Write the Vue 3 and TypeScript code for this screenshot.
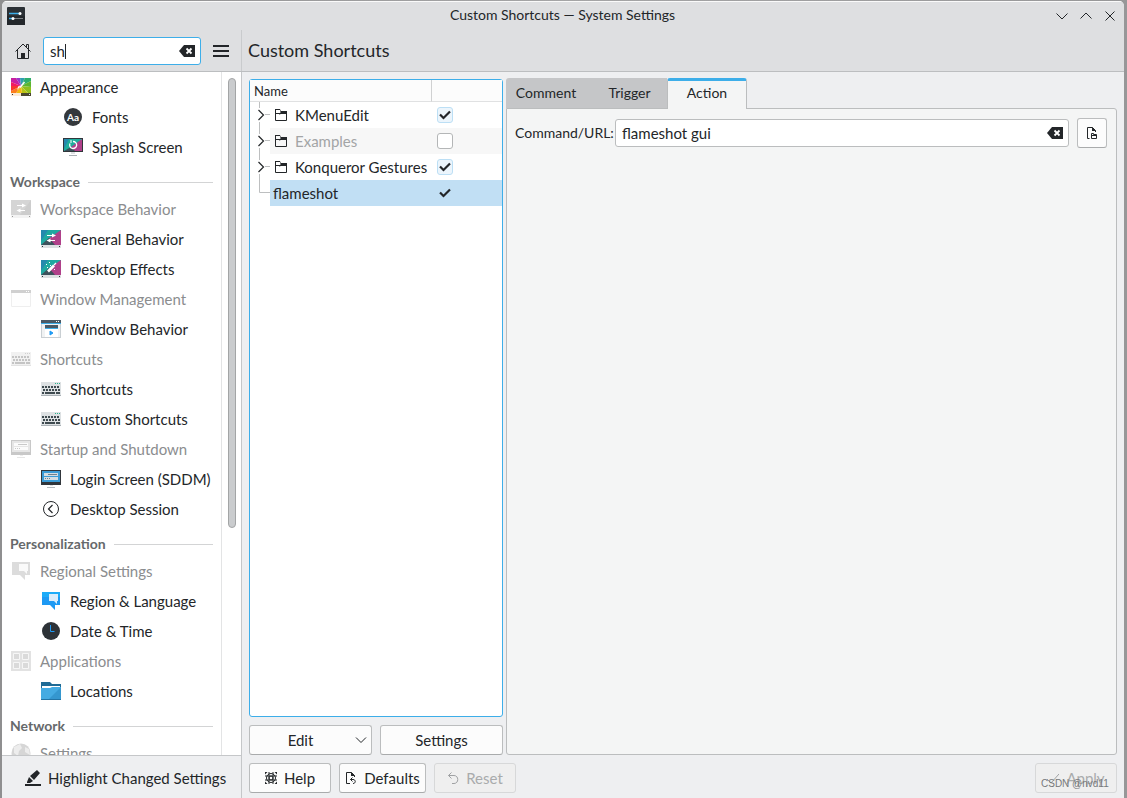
<script setup lang="ts">
import { ref } from 'vue'

interface Entry {
  kind: 'item' | 'header'
  label: string
  level?: 0 | 1 | 2
  icon?: string
  dim?: boolean
}

interface ActionRow {
  name: string
  enabled: boolean
  group: boolean
  dim?: boolean
  selected?: boolean
}

const query = ref('sh')
const command = ref('flameshot gui')
const activeTab = ref('Action')
const tabs = ['Comment', 'Trigger', 'Action']

const entries: Entry[] = [
  { kind: 'item', label: 'Appearance', level: 0, icon: 'appearance' },
  { kind: 'item', label: 'Fonts', level: 2, icon: 'fonts' },
  { kind: 'item', label: 'Splash Screen', level: 2, icon: 'splash' },
  { kind: 'header', label: 'Workspace' },
  { kind: 'item', label: 'Workspace Behavior', level: 0, icon: 'behavior', dim: true },
  { kind: 'item', label: 'General Behavior', level: 1, icon: 'behavior' },
  { kind: 'item', label: 'Desktop Effects', level: 1, icon: 'effects' },
  { kind: 'item', label: 'Window Management', level: 0, icon: 'windows', dim: true },
  { kind: 'item', label: 'Window Behavior', level: 1, icon: 'winbehavior' },
  { kind: 'item', label: 'Shortcuts', level: 0, icon: 'keyboard', dim: true },
  { kind: 'item', label: 'Shortcuts', level: 1, icon: 'keyboard' },
  { kind: 'item', label: 'Custom Shortcuts', level: 1, icon: 'keyboard' },
  { kind: 'item', label: 'Startup and Shutdown', level: 0, icon: 'login', dim: true },
  { kind: 'item', label: 'Login Screen (SDDM)', level: 1, icon: 'login' },
  { kind: 'item', label: 'Desktop Session', level: 1, icon: 'session' },
  { kind: 'header', label: 'Personalization' },
  { kind: 'item', label: 'Regional Settings', level: 0, icon: 'region', dim: true },
  { kind: 'item', label: 'Region & Language', level: 1, icon: 'region' },
  { kind: 'item', label: 'Date & Time', level: 1, icon: 'clock' },
  { kind: 'item', label: 'Applications', level: 0, icon: 'apps', dim: true },
  { kind: 'item', label: 'Locations', level: 1, icon: 'folder' },
  { kind: 'header', label: 'Network' },
  { kind: 'item', label: 'Settings', level: 0, icon: 'globe', dim: true },
]

const rows = ref<ActionRow[]>([
  { name: 'KMenuEdit', enabled: true, group: true },
  { name: 'Examples', enabled: false, group: true, dim: true },
  { name: 'Konqueror Gestures', enabled: true, group: true },
  { name: 'flameshot', enabled: true, group: false, selected: true },
])

const keyRows = [
  { y: 8, xs: [1, 4, 7, 10, 13, 16] },
  { y: 11, xs: [2, 5, 8, 11, 14, 17] },
]
</script>

<template>
  <div class="desktop">
    <div class="window">
      <header class="titlebar">
        <svg class="app-icon" viewBox="0 0 18 18" aria-hidden="true">
          <rect width="18" height="18" rx="1" fill="#2b3035" />
          <rect y="9" width="18" height="9" fill="#23272b" />
          <path d="M2 6.5h12" stroke="#3daee9" stroke-width="1.4" />
          <path d="M7 11.5h9" stroke="#7b8084" stroke-width="1.2" />
          <path d="M2 11.5h4" stroke="#3daee9" stroke-width="1.4" />
          <circle cx="13" cy="6.5" r="1.5" fill="#fff" />
          <circle cx="6" cy="11.5" r="1.5" fill="#fff" />
        </svg>
        <h1>Custom Shortcuts — System Settings</h1>
        <div class="win-buttons">
          <button aria-label="Minimize"><svg viewBox="0 0 12 12"><path d="M.5 3.500 6 9l5.500-5.500" /></svg></button>
          <button aria-label="Maximize"><svg viewBox="0 0 12 12"><path d="M.5 8.500 6 3l5.500 5.500" /></svg></button>
          <button aria-label="Close"><svg viewBox="0 0 12 12"><path d="M1.500 1.500l9 9M10.500 1.500l-9 9" /></svg></button>
        </div>
      </header>

      <div class="toolbar">
        <div class="tools">
          <button class="plain home" aria-label="Home">
            <svg width="16" height="16" viewBox="0 0 16 16" fill="none" stroke="#232629">
              <path d="M.5 8.500 8 1l7.500 7.500M2.500 7v8.500h11V7M11.500 4V1.500h2V6" />
              <path d="M6 10h4v5.500H6z" fill="#232629" stroke="none" />
            </svg>
          </button>
          <div class="search">
            <input v-model="query" type="text" aria-label="Search" />
            <span class="caret"></span>
            <button class="plain clear" aria-label="Clear search">
              <svg width="16" height="12" viewBox="0 0 16 12"><path d="M5 0h11v12H5L0 6z" fill="#232629" /><path d="M7.500 3.500l5 5M12.500 3.500l-5 5" stroke="#fff" stroke-width="1.800" /></svg>
            </button>
          </div>
          <button class="plain menu" aria-label="Menu">
            <svg width="16" height="12" viewBox="0 0 16 12"><path d="M0 1h16M0 6h16M0 11h16" stroke="#232629" stroke-width="2" /></svg>
          </button>
        </div>
        <h2>Custom Shortcuts</h2>
      </div>

      <div class="content">
        <aside class="sidebar">
          <div class="scroll">
            <nav class="list">
              <template v-for="(e, i) in entries" :key="i">
                <h3 v-if="e.kind === 'header'"><span>{{ e.label }}</span></h3>
                <a v-else href="#" :class="['item', 'level-' + e.level, { dim: e.dim }]">
                  <svg class="icon" viewBox="0 0 20 20" aria-hidden="true">
                    <g v-if="e.icon === 'appearance'">
                      <path d="M10 9 0 5V1h5z" fill="#c81fa0" /><path d="M10 9 5 1h4z" fill="#9a35c8" /><path d="M10 9 9 1h5z" fill="#2f9fb0" />
                      <path d="M10 9l4-8h6v3z" fill="#2fae6c" /><path d="M10 9l10-5v6z" fill="#5cb531" /><path d="M10 9l10 1v6h-3z" fill="#8fbf1f" /><path d="M10 9l7 7h-6z" fill="#b9c516" />
                      <path d="M10 9l1 7H5z" fill="#f0b90f" /><path d="M10 9 5 16H0v-2z" fill="#fb7d1d" /><path d="M10 9 0 14V9z" fill="#f8352f" /><path d="M10 9H0V5z" fill="#f01a62" />
                      <path d="M0 16h10v3H0z" fill="#fbead8" /><path d="M10 16h10v3H10z" fill="#4c4930" />
                      <path d="M1 17h1v1H1z" fill="#333" /><path d="M18 17h1v1h-1z" fill="#eee" />
                      <path d="M13.500 5 9 10.500" stroke="#fff" stroke-width="1.500" /><path d="M9.500 9.500 6 13l1.500-4z" fill="#fff" />
                    </g>
                    <g v-else-if="e.icon === 'fonts'">
                      <circle cx="10" cy="10" r="9" fill="#34383c" />
                      <text x="10" y="14" text-anchor="middle" class="aa">Aa</text>
                    </g>
                    <g v-else-if="e.icon === 'splash'">
                      <path d="M0 1h20v14H0z" fill="#31363b" /><path d="M1 2h18v12H1z" fill="#1fae9c" /><path d="M1 2h5L1 12z" fill="#2589ad" /><path d="M19 2v12h-9l-2-4z" fill="#b0408a" /><path d="M1 14h11l-4-4z" fill="#3b4f59" />
                      <path d="M7 6.500a3.500 3.500 0 1 0 3-2" fill="none" stroke="#fff" stroke-width="1.300" /><path d="M7 3h2v3H7z" fill="#fff" opacity=".5" />
                      <path d="M8 15h4v2H8z" fill="#dfe2e4" /><path d="M6 18h8v1H6z" fill="#a9afb4" />
                    </g>
                    <g v-else-if="e.icon === 'behavior' || e.icon === 'effects'">
                      <g v-if="e.dim"><path d="M0 1h20v15H0z" fill="#d5d5d5" /><path d="M20 1v15H9z" fill="#cdcdcd" /></g>
                      <g v-else><path d="M0 1h20v15H0z" fill="#1fa8a0" /><path d="M0 1h7L0 12z" fill="#2589ad" /><path d="M20 1v15h-9L7 10z" fill="#b0408a" /><path d="M0 16h14L8 9z" fill="#3d525c" /></g>
                      <path d="M0 16h20v3H0z" :fill="e.dim ? '#f3f3f3' : '#dce0e2'" /><path d="M1 17h1v1H1zM18 17h1v1h-1z" :fill="e.dim ? '#999' : '#2b3035'" />
                      <g v-if="e.icon === 'behavior'">
                        <path d="M6 6.500h7M8 11.500h6" stroke="#fff" /><path d="M11 4.500l4 2-4 2z" fill="#fff" /><path d="M9.500 9.500v4l-4-2z" fill="#fff" />
                      </g>
                      <g v-else>
                        <path d="M7 12.500l6-6" stroke="#fff" stroke-width="2.600" /><path d="M13 6l2-2" stroke="#fff" stroke-width="1.200" />
                        <path d="M5 5h1v1H5zM8 3h1v1H8zM9 6h1v1H9zM6 8h1v1H6zM13 10h1v1h-1z" fill="#fff" />
                      </g>
                    </g>
                    <g v-else-if="e.icon === 'windows'">
                      <path d="M.5 3.500h19v14H.5z" fill="#fefefe" stroke="#eee" /><path d="M0 1h20v3H0z" fill="#d0d0d0" /><path d="M15 2h1v1h-1zM17 2h1v1h-1z" fill="#fff" />
                    </g>
                    <g v-else-if="e.icon === 'winbehavior'">
                      <path d="M0 4h20v15H0z" fill="#c9cfd3" /><path d="M1 5h18v13H1z" fill="#f0f2f3" /><path d="M0 1h20v3H0z" fill="#4a5a66" /><path d="M0 4h20v1H0z" fill="#3daee9" />
                      <path d="M15 2h1v1h-1zM17 2h1v1h-1z" fill="#fff" /><path d="M4 6h13v3H4z" fill="#4a5a66" /><path d="M4 9h13v1H4z" fill="#3daee9" /><path d="M4 10h13v8H4z" fill="#fff" />
                      <path d="M9 12l3 2-3 2z" fill="#1d99f3" stroke="#1d99f3" />
                    </g>
                    <g v-else-if="e.icon === 'keyboard'">
                      <path d="M0 3h20v13H0z" :fill="e.dim ? '#f1f1f1' : '#dde1e3'" /><path d="M0 16h20v1H0z" :fill="e.dim ? '#e2e2e2' : '#a9b0b5'" />
                      <path d="M14 4h1v1h-1zM16 4h1v1h-1zM18 4h1v1h-1z" :fill="e.dim ? '#d0d0d0' : '#28b08d'" />
                      <g :fill="e.dim ? '#c4c4c4' : '#3f4b50'">
                        <template v-for="r in keyRows" :key="r.y">
                          <rect v-for="x in r.xs" :key="x" :x="x" :y="r.y - 1" width="2" height="2" />
                        </template>
                        <path d="M1 13h2v2H1zM4 13h10v2H4zM15 13h4v2h-4z" />
                      </g>
                    </g>
                    <g v-else-if="e.icon === 'login'">
                      <path d="M0 1h20v15H0z" :fill="e.dim ? '#c8c8c8' : '#31363b'" /><path d="M1 2h18v11H1z" :fill="e.dim ? '#e6e6e6' : '#3a9bd6'" />
                      <path d="M3 4h14v3H3zM3 8h14v3H3z" :fill="e.dim ? '#fbfbfb' : '#d3dde3'" />
                      <path d="M7 5h9v1H7zM4 9h1v1H4zM6 9h1v1H6zM8 9h1v1H8z" :fill="e.dim ? '#c9c9c9' : '#70818d'" />
                      <path d="M9 16h3v1H9z" :fill="e.dim ? '#eee' : '#dfe2e4'" /><path d="M6 18h8v1H6z" :fill="e.dim ? '#e6e6e6' : '#b4babf'" />
                    </g>
                    <g v-else-if="e.icon === 'session'" fill="none" stroke="#232629">
                      <circle cx="10" cy="10" r="7.500" /><path d="M11.500 6 7.500 10l4 4" stroke-width="1.200" />
                    </g>
                    <g v-else-if="e.icon === 'region'">
                      <path d="M1 1h18v13h-5v5l-5-5H1z" :fill="e.dim ? '#dcdcdc' : '#1d99f3'" /><path d="M1 1h18v5H1z" :fill="e.dim ? '#dcdcdc' : '#1cabf8'" />
                      <path d="M8 3h9v7h-1v3l-3-3H8z" :fill="e.dim ? '#fafafa' : '#d9ecfb'" />
                    </g>
                    <g v-else-if="e.icon === 'clock'">
                      <circle cx="10" cy="10" r="9" fill="#2d3237" /><path d="M9.500 4v6.500h4" fill="none" stroke="#1d99f3" />
                    </g>
                    <g v-else-if="e.icon === 'apps'">
                      <path d="M0 0h20v20H0z" fill="#e2e2e2" /><path d="M2.500 2.500h6v6h-6zM11.500 2.500h6v6h-6zM2.500 11.500h6v6h-6zM11.500 11.500h6v6h-6z" fill="#dadada" stroke="#f6f6f6" />
                    </g>
                    <g v-else-if="e.icon === 'folder'">
                      <path d="M0 1h9l2 2h9v8H0z" fill="#1f6b96" /><path d="M1 5h18v4H1z" fill="#fff" /><path d="M0 7h9l2-1h9v12H0z" fill="#45abe2" /><path d="M20 6v12H8z" fill="#3597cf" /><path d="M0 18h20v1H0z" fill="#2374a5" />
                    </g>
                    <g v-else-if="e.icon === 'globe'">
                      <circle cx="10" cy="10" r="9.500" fill="#d6d6d6" /><path d="M3 4l6-3 2 4-3 3-1 5-4-3zM14 4l4 2 1 6-5-3z" fill="#ededed" />
                    </g>
                  </svg>
                  <span>{{ e.label }}</span>
                </a>
              </template>
            </nav>
            <div class="track"><div class="thumb"></div></div>
          </div>
          <button class="highlight">
            <svg width="16" height="16" viewBox="0 0 16 16" fill="#232629"><path d="M0 14h16v2H0zM2 12l2-5 4 4-3 2H2zM5 6l7-6 3 3-6 7z" /></svg>
            <span>Highlight Changed Settings</span>
          </button>
        </aside>

        <main>
          <div class="panes">
            <section class="left">
              <div class="tree">
                <table>
                  <colgroup><col class="c-branch" /><col class="c-name" /><col /></colgroup>
                  <thead>
                    <tr><th colspan="2" scope="col">Name</th><th class="state" scope="col"></th></tr>
                  </thead>
                  <tbody>
                    <tr v-for="(r, i) in rows" :key="r.name" :class="{ alt: i === 1, selected: r.selected, muted: r.dim }">
                      <td class="branch">
                        <svg width="20" height="26" viewBox="0 0 20 26" fill="none">
                          <path v-if="r.group" d="M9.500 0v6M9.500 20v6M15 12.500h5" stroke="#bdbfc0" />
                          <path v-else d="M9.500 0v12.500H20" stroke="#bdbfc0" />
                          <path v-if="r.group" d="M8.500 8l5 5-5 5" stroke="#232629" stroke-width="1.200" />
                        </svg>
                      </td>
                      <td>
                        <div class="name">
                          <svg v-if="r.group" width="12" height="12" viewBox="0 0 12 12" fill="none" stroke="#232629">
                            <path d="M.5 0v11.500h11V3" /><path d="M0 .5h5" /><path d="M5 0l1 2h6v3H5.500L4.500 6V5l1-1.500z" fill="#232629" stroke="none" /><path d="M.5 4.500h5" />
                          </svg>
                          <span>{{ r.name }}</span>
                        </div>
                      </td>
                      <td class="check">
                        <input v-model="r.enabled" type="checkbox" :class="{ bare: r.selected }" :aria-label="'Enable ' + r.name" />
                        <svg v-if="r.enabled" width="16" height="16" viewBox="0 0 16 16"><path d="M3 7.500l3.500 3.500 6.500-6.500" fill="none" stroke="#232629" stroke-width="2.200" /></svg>
                      </td>
                    </tr>
                  </tbody>
                </table>
              </div>
              <div class="pair">
                <button class="btn edit"><span>Edit</span><svg width="12" height="12" viewBox="0 0 12 12"><path d="M1 3.500l5 5 5-5" fill="none" stroke="#232629" /></svg></button>
                <button class="btn">Settings</button>
              </div>
            </section>

            <section class="right">
              <div class="tabs" role="tablist">
                <button v-for="t in tabs" :key="t" role="tab" :aria-selected="activeTab === t" :class="{ active: activeTab === t }" @click="activeTab = t">{{ t }}</button>
              </div>
              <div class="panel" role="tabpanel">
                <div class="field">
                  <label for="command">Command/URL:</label>
                  <div class="command">
                    <input id="command" v-model="command" type="text" />
                    <button class="plain clear" aria-label="Clear command">
                      <svg width="16" height="12" viewBox="0 0 16 12"><path d="M5 0h11v12H5L0 6z" fill="#232629" /><path d="M7.500 3.500l5 5M12.500 3.500l-5 5" stroke="#fff" stroke-width="1.800" /></svg>
                    </button>
                  </div>
                  <button class="btn open" aria-label="Open file">
                    <svg width="12" height="12" viewBox="0 0 12 12" fill="none" stroke="#232629"><path d="M3.500 11.500h-2V.5h5l3 3V5" /><path d="M6 0l4 4H6z" fill="#232629" stroke="none" /><path d="M5.500 11.500v-5h2v1h3v4zM6 8.500h4" /></svg>
                  </button>
                </div>
              </div>
            </section>
          </div>

          <footer>
            <button class="btn wide">
              <svg width="12" height="12" viewBox="0 0 12 12" fill="none" stroke="#232629"><circle cx="6" cy="6" r="4.500" /><circle cx="6" cy="6" r="2" /><path d="M0 4h12M0 8h12M4 0v12M8 0v12" /><path d="M0 0h2.500L0 2.500zM12 0v2.500L9.500 0zM0 12V9.500L2.500 12zM12 12H9.500L12 9.500z" fill="#232629" stroke="none" /></svg>
              <span>Help</span>
            </button>
            <button class="btn defaults">
              <svg width="12" height="14" viewBox="0 0 12 14" fill="none" stroke="#232629"><path d="M5 12.500H1.500v-11h5l3 3V6" /><path d="M6 1l4 4H6z" fill="#232629" stroke="none" /><path d="M7.500 6.500l-2 2 2 2M5.500 8.500H8c3 0 3 4 0 4" /></svg>
              <span>Defaults</span>
            </button>
            <button class="btn wide" disabled>
              <svg width="12" height="14" viewBox="0 0 12 14" fill="none" stroke="#9fa1a3"><path d="M4.500 1.500l-3 3 3 3M1.500 4.500H7c5 0 5 8 0 8H5" /></svg>
              <span>Reset</span>
            </button>
            <div class="apply">
              <button class="btn wide" disabled>
                <svg width="12" height="12" viewBox="0 0 12 12" fill="none" stroke="#9fa1a3"><path d="M0 7l4 4 8-9" /></svg>
                <span>Apply</span>
              </button>
              <span class="mark">CSDN @nvd11</span>
            </div>
          </footer>
        </main>
      </div>
    </div>
  </div>
</template>

<style>
body {
  margin: 0;
  background: #a5a5a6;
}
</style>

<style scoped>
* {
  box-sizing: border-box;
}

.desktop {
  height: 100vh;
  padding: 1px 3px 0 2px;
  overflow: hidden;
  background: linear-gradient(90deg, #8f8f90, #a5a5a6 50%, #979798);
  color: #232629;
  font: 15px/20px Lato, "Noto Sans", sans-serif;
}

button,
input {
  margin: 0;
  color: inherit;
  font: inherit;
}

h1,
h2,
h3 {
  margin: 0;
}

.plain {
  display: flex;
  padding: 0;
  border: 0;
  background: none;
}

.window {
  display: flex;
  flex-direction: column;
  height: 100%;
  overflow: hidden;
  border-radius: 5px 5px 0 0;
  background: #eeeff1;
}

.titlebar {
  display: flex;
  flex: none;
  align-items: center;
  height: 29px;
  padding: 0 8px 0 5px;
  border-top: 1px solid #fafafa;
  background: #dedfe1;
}

.app-icon {
  width: 18px;
  height: 18px;
}

h1 {
  flex: 1;
  padding: 0 0 2px 44px;
  font-size: 14px;
  font-weight: 400;
  text-align: center;
}

.win-buttons {
  display: flex;
  gap: 12px;
}

.win-buttons button {
  display: flex;
  padding: 0;
  border: 0;
  background: none;
}

.win-buttons svg {
  width: 12px;
  height: 12px;
  fill: none;
  stroke: #232629;
}

.toolbar {
  display: flex;
  flex: none;
  align-items: stretch;
  height: 42px;
  border-bottom: 1px solid #bcbec0;
  background: #dedfe1;
}

.tools {
  display: flex;
  align-items: center;
  width: 240px;
  padding: 0 12px 0 13px;
  border-right: 1px solid #c9cbcd;
}

.search {
  position: relative;
  flex: 1;
  margin: 0 12px;
}

.search input,
.command input {
  display: block;
  width: 100%;
  height: 28px;
  padding: 0 30px 0 6px;
  border: 1px solid #3daee9;
  border-radius: 3px;
  outline: 0;
  background: #fff;
}

.clear {
  position: absolute;
  top: 8px;
  right: 6px;
}

.caret {
  position: absolute;
  top: 7px;
  left: 22px;
  width: 1px;
  height: 15px;
  background: #232629;
}

h2 {
  padding-left: 6px;
  font-size: 18px;
  font-weight: 400;
  line-height: 40px;
}

.content {
  display: flex;
  flex: 1;
  min-height: 0;
}

.sidebar {
  display: flex;
  flex: none;
  flex-direction: column;
  width: 240px;
  border-right: 1px solid #c5c7c9;
}

.scroll {
  display: flex;
  flex: 1;
  min-height: 0;
  overflow: hidden;
  background: #fff;
}

.list {
  flex: 1;
  border-right: 1px solid #e3e4e5;
}

.item {
  display: flex;
  align-items: center;
  gap: 9px;
  height: 30px;
  padding-left: 9px;
  color: #232629;
  text-decoration: none;
  white-space: nowrap;
}

.level-1 {
  padding-left: 39px;
}

.level-2 {
  padding-left: 61px;
}

.dim {
  color: #8b8d8f;
}

.icon {
  flex: none;
  width: 20px;
  height: 20px;
}

.aa {
  fill: #fff;
  font-size: 10px;
  font-weight: 700;
}

h3 {
  display: flex;
  align-items: center;
  gap: 8px;
  height: 32px;
  padding: 8px 8px 0;
  color: #66696b;
  font-size: 14px;
  font-weight: 700;
}

h3::after {
  flex: 1;
  height: 1px;
  background: #d3d4d5;
  content: "";
}

.track {
  flex: none;
  width: 19px;
  padding: 6px 5px 5px 6px;
}

.thumb {
  height: 67%;
  border: 1px solid #a3a5a6;
  border-radius: 4px;
  background: #caccce;
}

.highlight {
  display: flex;
  flex: none;
  align-items: center;
  gap: 7px;
  height: 43px;
  padding: 2px 0 0 23px;
  border: 0;
  border-top: 1px solid #c5c7c9;
  background: #eeeff1;
  white-space: nowrap;
}

main {
  display: flex;
  flex: 1;
  flex-direction: column;
  min-width: 0;
  padding: 6px 7px 5px;
}

.panes {
  display: flex;
  flex: 1;
  gap: 3px;
  min-height: 0;
}

.left {
  display: flex;
  flex: none;
  flex-direction: column;
  gap: 8px;
  width: 254px;
  padding-top: 1px;
}

.tree {
  flex: 1;
  border: 1px solid #3daee9;
  border-radius: 3px;
  background: #fff;
}

table {
  width: 100%;
  border-collapse: separate;
  border-spacing: 0;
  table-layout: fixed;
}

.c-branch {
  width: 20px;
}

.c-name {
  width: 161px;
}

th {
  height: 22px;
  padding: 0 4px;
  border-bottom: 1px solid #e0e1e2;
  background: #fcfcfc;
  font-size: 13px;
  font-weight: 400;
  text-align: left;
}

.state {
  border-left: 1px solid #d0d1d2;
}

td {
  height: 26px;
  padding: 0;
  white-space: nowrap;
}

.branch svg {
  display: block;
}

.alt td:not(.branch) {
  background: #f7f7f7;
}

.selected td:not(.branch) {
  background: #c1dff4;
}

.muted .name span {
  color: #a3a5a6;
}

.name {
  display: flex;
  align-items: center;
  gap: 8px;
  padding-left: 5px;
}

.selected .name {
  padding-left: 3px;
}

.check {
  position: relative;
}

.check input {
  display: block;
  width: 16px;
  height: 16px;
  margin-left: 6px;
  border: 1px solid #b4b6b7;
  border-radius: 3px;
  appearance: none;
  background: #fff;
}

.check input:checked {
  border-color: #bcdff5;
  background: #ecf5fc;
}

.check input.bare {
  border-color: transparent;
  background: none;
}

.check svg {
  position: absolute;
  top: 5px;
  left: 6px;
  pointer-events: none;
}

.pair {
  display: grid;
  grid-template-columns: 1fr 1fr;
  gap: 8px;
}

.btn {
  display: flex;
  align-items: center;
  justify-content: center;
  gap: 7px;
  height: 30px;
  padding: 0;
  border: 1px solid #bbbdbe;
  border-bottom-color: #a9abac;
  border-radius: 3px;
  background: #fcfcfc;
}

.btn:disabled {
  border-color: #d7d8d9;
  background: #efefef;
  color: #a9abac;
}

.edit {
  padding: 0 4px 0 0;
}

.edit span {
  flex: 1;
  padding-left: 3px;
}

.right {
  display: flex;
  flex: 1;
  flex-direction: column;
  min-width: 0;
}

.tabs {
  display: flex;
}

.tabs button {
  height: 30px;
  padding: 0 8px 0 0;
  border: 0;
  background: #c5c6c8;
  font-size: 14px;
}

.tabs button:first-child {
  width: 88px;
  border-radius: 3px 0 0;
}

.tabs button:nth-child(2) {
  width: 73px;
  padding: 0 10px 0 8px;
}

.tabs button.active {
  z-index: 1;
  width: 80px;
  height: 31px;
  margin-bottom: -1px;
  padding: 0 0 4px;
  border: 1px solid #bbbdbe;
  border-top: 3px solid #3daee9;
  border-bottom: 0;
  border-radius: 3px 3px 0 0;
  background: #f4f5f5;
}

.panel {
  flex: 1;
  padding: 9px 9px 9px 8px;
  border: 1px solid #bbbdbe;
  border-radius: 0 3px 3px;
  background: #f4f5f5;
}

.field {
  display: flex;
  align-items: center;
  gap: 8px;
}

.field label {
  flex: none;
  width: 92px;
  font-size: 14px;
}

.command {
  position: relative;
  flex: 1;
}

.command input {
  border-color: #bbbdbe;
}

.open {
  width: 30px;
}

footer {
  display: flex;
  flex: none;
  gap: 8px;
  padding-top: 8px;
}

.wide {
  width: 82px;
}

.defaults {
  width: 87px;
}

.apply {
  position: relative;
  margin-left: auto;
}

.mark {
  position: absolute;
  top: 11px;
  left: 6px;
  color: #77797b;
  font: 10px/20px "Liberation Sans", sans-serif;
  white-space: nowrap;
}
</style>
